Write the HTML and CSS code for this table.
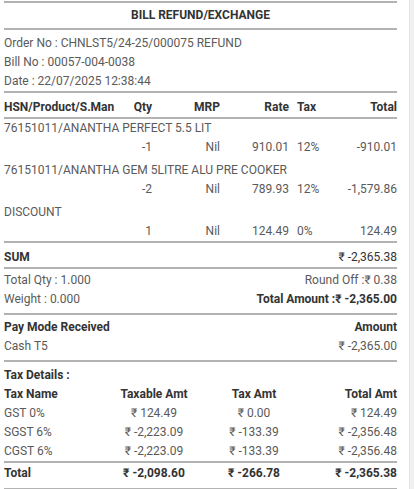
FILE: index.html
```html
<!DOCTYPE html>
<html>
<head>
<meta charset="utf-8">
<link rel="stylesheet" href="styles.css">
</head>
<body>
<div class="page">
  <main class="bill">
    <div class="title">BILL REFUND/EXCHANGE</div>
    <div class="info">
      <div>Order No : CHNLST5/24-25/000075 REFUND</div>
      <div>Bill No : 00057-004-0038</div>
      <div>Date : 22/07/2025 12:38:44</div>
    </div>
    <div class="items-head">
      <span>HSN/Product/S.Man</span>
      <span class="r">Qty</span>
      <span class="r">MRP</span>
      <span class="r">Rate</span>
      <span class="tax">Tax</span>
      <span class="r">Total</span>
    </div>
    <div class="items">
      <div class="item">
        <span class="name">76151011/ANANTHA PERFECT 5.5 LIT</span>
        <span></span>
        <span class="r">-1</span>
        <span class="r">Nil</span>
        <span class="r">910.01</span>
        <span class="tax">12%</span>
        <span class="r">-910.01</span>
      </div>
      <div class="item">
        <span class="name">76151011/ANANTHA GEM 5LITRE ALU PRE COOKER</span>
        <span></span>
        <span class="r">-2</span>
        <span class="r">Nil</span>
        <span class="r">789.93</span>
        <span class="tax">12%</span>
        <span class="r">-1,579.86</span>
      </div>
      <div class="item last">
        <span class="name">DISCOUNT</span>
        <span></span>
        <span class="r">1</span>
        <span class="r">Nil</span>
        <span class="r">124.49</span>
        <span class="tax">0%</span>
        <span class="r">124.49</span>
      </div>
    </div>
    <div class="sum">
      <span class="b">SUM</span>
      <span>₹ -2,365.38</span>
    </div>
    <div class="totals">
      <div class="row"><span>Total Qty : 1.000</span><span>Round Off :₹ 0.38</span></div>
      <div class="row"><span>Weight : 0.000</span><span class="b">Total Amount :₹ -2,365.00</span></div>
    </div>
    <div class="pay">
      <div class="row b"><span>Pay Mode Received</span><span>Amount</span></div>
      <div class="row"><span>Cash T5</span><span>₹ -2,365.00</span></div>
    </div>
    <div class="taxes">
      <div class="b">Tax Details :</div>
      <div class="trow b"><span>Tax Name</span><span class="c">Taxable Amt</span><span class="c">Tax Amt</span><span class="r">Total Amt</span></div>
      <div class="trow"><span>GST 0%</span><span class="c">₹ 124.49</span><span class="c">₹ 0.00</span><span class="r">₹ 124.49</span></div>
      <div class="trow"><span>SGST 6%</span><span class="c">₹ -2,223.09</span><span class="c">₹ -133.39</span><span class="r">₹ -2,356.48</span></div>
      <div class="trow"><span>CGST 6%</span><span class="c">₹ -2,223.09</span><span class="c">₹ -133.39</span><span class="r">₹ -2,356.48</span></div>
    </div>
    <div class="ttotal trow b"><span>Total</span><span class="c">₹ -2,098.60</span><span class="c">₹ -266.78</span><span class="r">₹ -2,365.38</span></div>
  </main>
  <aside class="strip"></aside>
</div>
</body>
</html>
```

FILE: styles.css
```css
html, body {
  margin: 0;
  padding: 0;
  background: #fff;
}
body {
  font-family: Roboto, "Noto Sans", "DejaVu Sans", sans-serif;
  font-size: 12px;
  line-height: 19px;
  color: #5a5a5a;
}
.page {
  display: flex;
  min-height: 489px;
}
.bill {
  width: 393px;
  padding: 1px 12px 0 4px;
}
.strip {
  flex: 1;
  background: #f1f1f3;
  border-left: 1px solid #e4e4e6;
}
.b { font-weight: bold; color: #333; }
.r { text-align: right; }
.c { text-align: center; }

.title {
  border-top: 2px solid #b3b3b3;
  border-bottom: 2px solid #b3b3b3;
  text-align: center;
  font-weight: bold;
  color: #333;
  line-height: 25px;
}
.info {
  padding: 4px 0 0;
  border-bottom: 2px solid #b3b3b3;
}
.items-head, .item {
  display: grid;
  grid-template-columns: 107px 41px 68px 69px 54px 54px;
}
.items-head {
  padding-top: 5px;
  font-weight: bold;
  color: #333;
  border-bottom: 2px solid #b3b3b3;
}
.tax { padding-left: 8px; }
.item .name {
  grid-column: 1 / -1;
  white-space: nowrap;
}
.item { padding-bottom: 4px; }
.item.last { padding-bottom: 0; }
.items { border-bottom: 2px solid #b3b3b3; }
.sum {
  display: flex;
  justify-content: space-between;
  padding-top: 5px;
  color: #333;
  border-bottom: 2px solid #b3b3b3;
}
.row {
  display: flex;
  justify-content: space-between;
}
.totals {
  padding: 2px 0 4px;
  border-bottom: 2px solid #b3b3b3;
}
.pay {
  padding: 3px 0 4px;
  border-bottom: 2px solid #b3b3b3;
}
.taxes {
  padding-top: 4px;
  border-bottom: 2px solid #b3b3b3;
}
.trow {
  display: grid;
  grid-template-columns: 100px 100px 100px 93px;
}
.ttotal {
  padding: 1px 0 5px;
  border-bottom: 2px solid #b3b3b3;
}
```
